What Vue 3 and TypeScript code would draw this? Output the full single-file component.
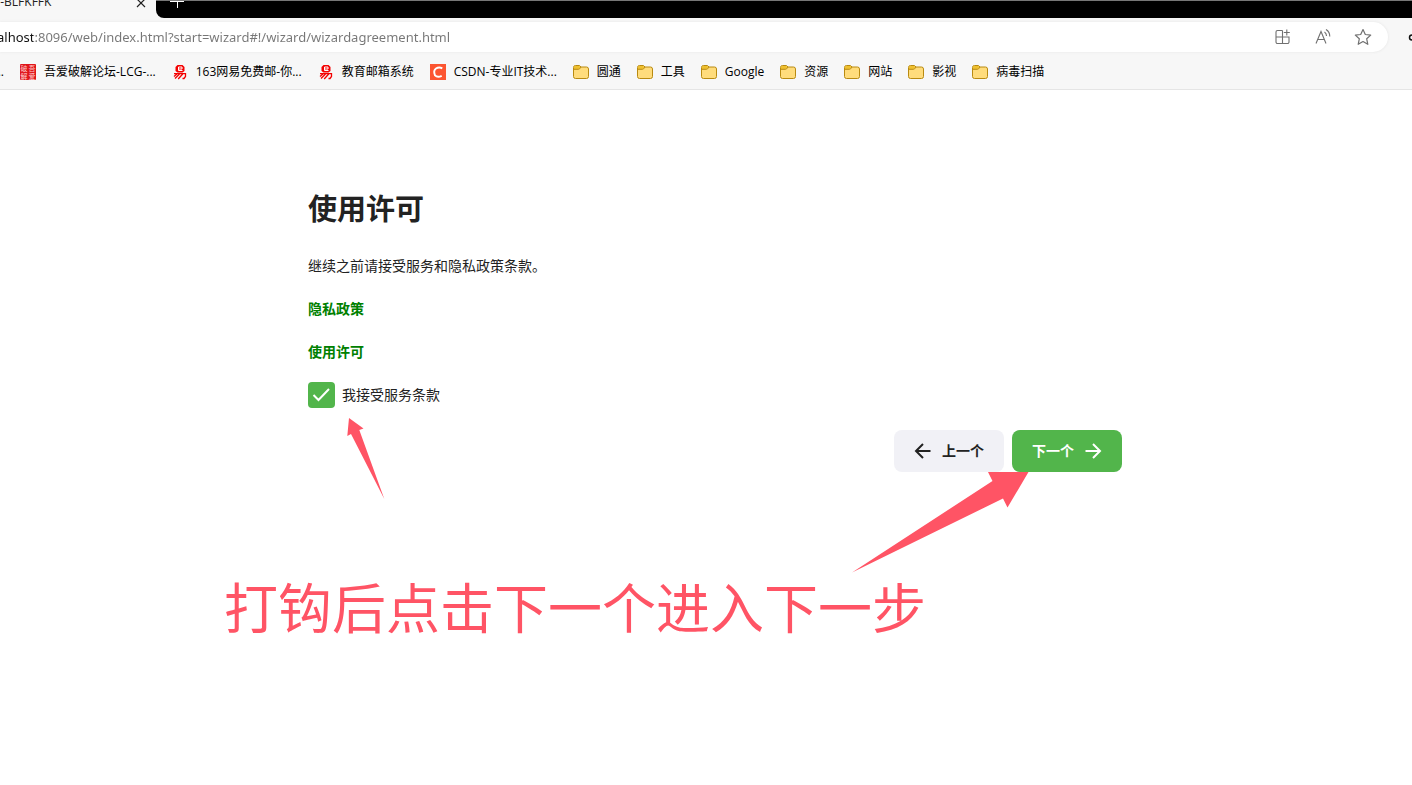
<script setup lang="ts">
import { ref } from 'vue'

type IconKind = 'forum' | 'mail' | 'csdn' | 'folder'

interface Bookmark {
  label: string
  icon: IconKind
}

const bookmarks: Bookmark[] = [
  { label: '吾爱破解论坛-LCG-...', icon: 'forum' },
  { label: '163网易免费邮-你...', icon: 'mail' },
  { label: '教育邮箱系统', icon: 'mail' },
  { label: 'CSDN-专业IT技术...', icon: 'csdn' },
  { label: '圆通', icon: 'folder' },
  { label: '工具', icon: 'folder' },
  { label: 'Google', icon: 'folder' },
  { label: '资源', icon: 'folder' },
  { label: '网站', icon: 'folder' },
  { label: '影视', icon: 'folder' },
  { label: '病毒扫描', icon: 'folder' },
]

const address = ref('alhost:8096/web/index.html?start=wizard#!/wizard/wizardagreement.html')
const accepted = ref(true)
</script>

<template>
  <div class="browser">
    <header class="chrome">
      <div class="tabs">
        <div class="tab">
          <span class="tab-title">P-BLFKFFK</span>
          <button class="tab-close" type="button" aria-label="关闭标签页">
            <svg width="10" height="10" viewBox="0 0 10 10"><path d="M1 1l8 8M9 1l-8 8" stroke="#222" stroke-width="1.2" /></svg>
          </button>
        </div>
        <div class="strip">
          <button class="tab-new" type="button" aria-label="新建标签页">
            <svg width="14" height="14" viewBox="0 0 14 14"><path d="M7.5 0v14M0 7.5h14" stroke="#fff" /></svg>
          </button>
        </div>
      </div>

      <div class="toolbar">
        <div class="address">
          <input v-model="address" class="url" type="text" aria-label="地址" spellcheck="false" />
          <button class="tool" type="button" aria-label="应用">
            <svg width="18" height="18" viewBox="0 0 18 18" fill="none" stroke="#707070" stroke-width="1.1">
              <path d="M8.5 2.500H3.500a1.500 1.500 0 0 0-1.500 1.500v10a1.500 1.500 0 0 0 1.500 1.500h10a1.500 1.500 0 0 0 1.500-1.500V9H2M8.500 2.500v13M12.800 1.500v6M9.800 4.500h6" />
            </svg>
          </button>
          <button class="tool" type="button" aria-label="大声朗读">
            <svg width="18" height="18" viewBox="0 0 18 18" fill="none" stroke="#707070" stroke-width="1.1">
              <path d="M2 15.500L7 3.500l5 12M3.800 11.500h6.400M10.500 4q2 1.400 2 4M12 1.500q3.800 2.200 3.800 7" />
            </svg>
          </button>
          <button class="tool" type="button" aria-label="收藏">
            <svg width="18" height="18" viewBox="0 0 18 18" fill="none" stroke="#707070" stroke-width="1.2" stroke-linejoin="round">
              <path d="M9 1.500l2.300 5 5.400.6-4 3.700 1.100 5.500L9 13.600l-4.800 2.700 1.100-5.500-4-3.700 5.400-.6z" />
            </svg>
          </button>
        </div>
        <button class="extension" type="button" aria-label="扩展">
          <svg width="18" height="18" viewBox="0 0 18 18" fill="none" stroke="#111" stroke-width="1.5">
            <path d="M5 15.500V12H4a2 2 0 1 1 0-5h1V4h4a2 2 0 1 1 4 0h3v11.500z" />
          </svg>
        </button>
      </div>

      <nav class="bookmarks" aria-label="书签">
        <span class="cut">..</span>
        <a v-for="item in bookmarks" :key="item.label" class="bookmark" href="#">
          <svg v-if="item.icon === 'forum'" class="mark" viewBox="0 0 16 16" aria-hidden="true">
            <rect width="16" height="16" rx="1" fill="#e0151a" />
            <g fill="#ffc9c9" font-size="7">
              <text x="0.500" y="7">破</text><text x="8.500" y="7">吾</text>
              <text x="0.500" y="14.500">解</text><text x="8.500" y="14.500">爱</text>
            </g>
          </svg>
          <svg v-else-if="item.icon === 'mail'" class="mark" viewBox="0 0 16 16" aria-hidden="true">
            <path d="M5.500 1h5l2 2v4l-2 1.500h-5L3.500 7V3z" fill="#f40000" />
            <path d="M10.500 6.500H6.500V3h3.500v2H6.500" fill="none" stroke="#fff" />
            <path d="M2 9.700h11.500v2.800l-1.500 2h-1.500M5.500 9.500L2 12.500M7.500 10l-4.500 4.500M10.700 10l-4.500 5" fill="none" stroke="#f40000" stroke-width="1.300" />
          </svg>
          <svg v-else-if="item.icon === 'csdn'" class="mark" viewBox="0 0 16 16" aria-hidden="true">
            <rect width="16" height="16" fill="#fc5531" />
            <path d="M12.300 4.300Q9 2.500 6 4.500T5 11.400Q7.500 14 11.700 11.800" fill="none" stroke="#fff" stroke-width="1.900" />
          </svg>
          <svg v-else class="mark" viewBox="0 0 16 16" aria-hidden="true">
            <path d="M.5 4v8.500a2 2 0 0 0 2 2h11a2 2 0 0 0 2-2V5a2 2 0 0 0-2-2H8L6.500 1.500h-4a2 2 0 0 0-2 2z" fill="#ffdc7c" stroke="#b98a10" />
            <path d="M1 4.500V3.500A1.500 1.500 0 0 1 2.500 2h3.800l1.200 1.300-1.500 1.700H1z" fill="#efc02f" />
            <path d="M.5 5.300H5.500q1 0 1.500-1l1-1.300" fill="none" stroke="#b98a10" />
          </svg>
          <span>{{ item.label }}</span>
        </a>
      </nav>
    </header>

    <main class="page">
      <form class="wizard" @submit.prevent>
        <h1>使用许可</h1>
        <p>继续之前请接受服务和隐私政策条款。</p>
        <a class="doc" href="#">隐私政策</a>
        <a class="doc" href="#">使用许可</a>
        <label class="accept">
          <span class="box">
            <input v-model="accepted" type="checkbox" />
            <svg v-if="accepted" width="27" height="26" viewBox="0 0 27 26" aria-hidden="true">
              <path d="M5.500 13l5 5L21 7" fill="none" stroke="#fff" stroke-width="2" />
            </svg>
          </span>
          <span>我接受服务条款</span>
        </label>
        <div class="actions">
          <button class="step prev" type="button">
            <svg width="18" height="18" viewBox="0 0 18 18" aria-hidden="true"><path d="M16.500 9H2.500M9 2L2 9l7 7" /></svg>
            <span>上一个</span>
          </button>
          <button class="step next" type="submit">
            <span>下一个</span>
            <svg width="18" height="18" viewBox="0 0 18 18" aria-hidden="true"><path d="M1.500 9h14M9 2l7 7-7 7" /></svg>
          </button>
        </div>
      </form>

      <svg class="arrow arrow-check" width="38" height="82" viewBox="0 0 38 82" aria-hidden="true">
        <path d="M2 0L16.500 10.500 12.300 12 37.300 81 4 16 .300 18z" />
      </svg>
      <svg class="arrow arrow-next" width="177" height="101" viewBox="0 0 177 101" aria-hidden="true">
        <path d="M136 0h40.500L155.500 35.500 151 26.500 0 100.500 140.500 9z" />
      </svg>
      <div class="note">打钩后点击下一个进入下一步</div>
    </main>
  </div>
</template>

<style>
html,
body {
  background: #fff;
}
</style>

<style scoped>
.browser {
  display: flex;
  flex-direction: column;
  min-height: 100vh;
  overflow: hidden;
  font-family: "Open Sans", "Noto Sans CJK SC", sans-serif;
  color: #222;
}
button {
  padding: 0;
  border: 0;
  background: none;
  font: inherit;
  color: inherit;
}
svg {
  display: block;
  flex: none;
}
.chrome {
  background: #f7f7f7;
  border-bottom: 1px solid #e5e5e5;
}
.tabs {
  display: flex;
  height: 18px;
}
.tab {
  display: flex;
  justify-content: space-between;
  width: 156px;
  box-sizing: border-box;
  padding-right: 10px;
  font-size: 12px;
  line-height: 16px;
}
.tab-title {
  margin: -6px 0 0 -7px;
}
.tab-close {
  align-self: flex-start;
  margin-top: -2px;
}
.strip {
  flex: 1;
  box-sizing: border-box;
  border-top: 1px solid #777;
  border-bottom-left-radius: 8px;
  background: #000;
  overflow: hidden;
}
.tab-new {
  display: block;
  margin: -7px 0 0 14px;
}
.toolbar {
  display: flex;
  align-items: center;
  padding-top: 4px;
  height: 30px;
}
.address {
  flex: 1;
  display: flex;
  align-items: center;
  gap: 22px;
  height: 30px;
  margin-right: 20px;
  padding-right: 16px;
  box-sizing: border-box;
  border-radius: 0 15px 15px 0;
  background: #fff;
  box-shadow: 0 0 3px #e4e4e4;
}
.url {
  flex: 1;
  min-width: 0;
  margin-left: -3px;
  padding: 0;
  border: 0;
  outline: 0;
  font-family: "Noto Sans", "Noto Sans CJK SC", sans-serif;
  font-size: 13px;
  line-height: 20px;
  color: transparent;
  background: linear-gradient(90deg, #111 36px, #767676 36px);
  background-clip: text;
}
.extension {
  margin-right: -14px;
}
.bookmarks {
  display: flex;
  align-items: center;
  gap: 16px;
  height: 35px;
  padding-top: 2px;
  font-size: 12px;
  line-height: 16px;
  white-space: nowrap;
  color: #000;
}
.cut {
  display: flex;
  justify-content: flex-end;
  width: 4px;
}
.bookmark {
  display: flex;
  align-items: center;
  gap: 8px;
  color: inherit;
  text-decoration: none;
}
.mark {
  width: 16px;
  height: 16px;
}
.page {
  flex: 1;
  position: relative;
  padding: 97px 290px 120px 308px;
  font-size: 14px;
  line-height: 20px;
}
.wizard {
  display: flex;
  flex-direction: column;
  align-items: flex-start;
}
h1 {
  margin: 0 0 25px;
  font-size: 29px;
  line-height: 44px;
  font-weight: 700;
}
p {
  margin: 0 0 23px;
}
.doc {
  margin-bottom: 23px;
  font-weight: 700;
  color: #008000;
  text-decoration: none;
}
.accept {
  display: flex;
  align-items: center;
  gap: 7px;
  margin-top: -3px;
}
.box {
  display: grid;
}
.box > * {
  grid-area: 1 / 1;
}
.box input {
  appearance: none;
  width: 27px;
  height: 26px;
  margin: 0;
  border-radius: 4px;
  background: #e5e5e5;
}
.box input:checked {
  background: #52b54b;
}
.box svg {
  pointer-events: none;
}
.actions {
  align-self: flex-end;
  display: flex;
  gap: 8px;
  margin-top: 22px;
}
.step {
  display: flex;
  align-items: center;
  justify-content: center;
  gap: 10px;
  width: 110px;
  height: 42px;
  border-radius: 8px;
  font-weight: 700;
}
.step path {
  fill: none;
  stroke: currentColor;
  stroke-width: 2;
}
.prev {
  background: #f1f1f6;
}
.next {
  background: #52b54b;
  color: #fff;
}
.arrow {
  position: absolute;
  fill: #ff5465;
}
.arrow-check {
  left: 347px;
  top: 328px;
}
.arrow-next {
  left: 852px;
  top: 382px;
}
.note {
  position: absolute;
  left: 224px;
  top: 480px;
  font-size: 54px;
  line-height: 76px;
  white-space: nowrap;
  color: #ff5465;
}
</style>
